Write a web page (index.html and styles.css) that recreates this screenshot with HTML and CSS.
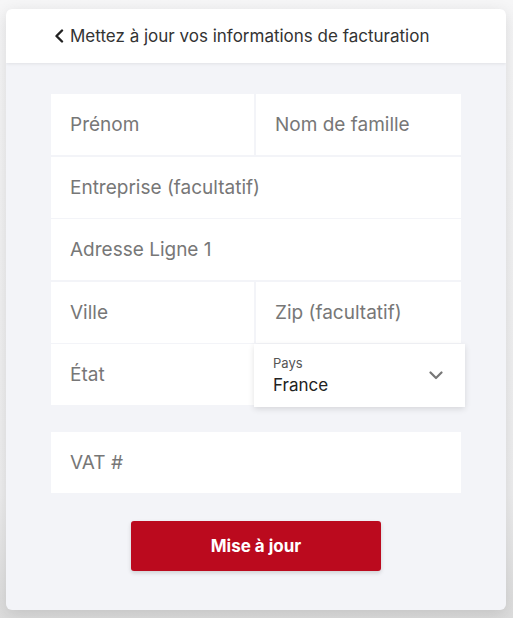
FILE: index.html
```html
<!DOCTYPE html>
<html lang="fr">
<head>
    <meta charset="UTF-8">
    <meta name="viewport" content="width=device-width, initial-scale=1.0">
    <title>Facturation</title>
    <link rel="stylesheet" href="styles.css">
</head>
<body>

<div class="backdrop">
    <div class="card">
        <header class="card-header">
            <svg class="back-icon" width="10" height="14" viewBox="0 0 10 14">
                <path d="M8 1.5 L2.5 7 L8 12.5" fill="none" stroke="#222" stroke-width="2.4" stroke-linecap="round" stroke-linejoin="round"/>
            </svg>
            <span class="title">Mettez à jour vos informations de facturation</span>
        </header>

        <div class="card-body">
            <div class="fields">
                <div class="field">Prénom</div>
                <div class="field">Nom de famille</div>
                <div class="field wide">Entreprise (facultatif)</div>
                <div class="field wide">Adresse Ligne 1</div>
                <div class="field">Ville</div>
                <div class="field">Zip (facultatif)</div>
                <div class="field">État</div>
                <div class="field select">
                    <div class="select-text">
                        <span class="select-label">Pays</span>
                        <span class="select-value">France</span>
                    </div>
                    <svg class="chevron" width="14" height="9" viewBox="0 0 14 9">
                        <path d="M1.5 1.5 L7 7 L12.5 1.5" fill="none" stroke="#777" stroke-width="2.2" stroke-linecap="round" stroke-linejoin="round"/>
                    </svg>
                </div>
            </div>

            <div class="field vat">VAT #</div>

            <div class="actions">
                <button class="btn-update">Mise à jour</button>
            </div>
        </div>
    </div>
</div>

</body>
</html>
```

FILE: styles.css
```css
body {
    margin: 0;
    padding: 0;
    font-family: 'Inter', 'Roboto', sans-serif;
    background-color: #d9d9d9;
    overflow: hidden;
}
.backdrop {
    height: 618px;
    padding: 9px 7px 0 6px;
    box-sizing: border-box;
    background: linear-gradient(180deg, #f6f6f7 0%, #eeeeef 80%, #dcdcdc 100%);
}
.card {
    height: 601px;
    border-radius: 6px;
    overflow: hidden;
    background-color: #f3f4f8;
    box-shadow: 0 4px 16px rgba(0, 0, 0, 0.12);
}
.card-header {
    height: 54px;
    background-color: white;
    display: flex;
    align-items: center;
    padding-left: 48px;
    box-shadow: 0 1px 3px rgba(0, 0, 0, 0.08);
    position: relative;
}
.back-icon {
    margin-right: 6px;
}
.title {
    font-size: 17px;
    color: #333;
}
.card-body {
    padding: 31px 45px 0 45px;
}
.fields {
    display: grid;
    grid-template-columns: 203px 205px;
    grid-auto-rows: 61px;
    gap: 1.5px 2px;
}
.field {
    background-color: white;
    display: flex;
    align-items: center;
    padding-left: 19px;
    font-size: 19px;
    color: #777;
    box-sizing: border-box;
}
.field.wide {
    grid-column: span 2;
}
.select {
    margin: 0 -4px 0 -2px;
    height: 63px;
    padding-left: 19px;
    padding-right: 22px;
    justify-content: space-between;
    box-shadow: 0 2px 6px rgba(0, 0, 0, 0.12);
    position: relative;
    z-index: 1;
}
.select-text {
    display: flex;
    flex-direction: column;
}
.select-label {
    font-size: 13px;
    color: #555;
    line-height: 16px;
    margin-bottom: 3px;
}
.select-value {
    font-size: 17px;
    color: #222;
    line-height: 22px;
}
.vat {
    margin-top: 27px;
    height: 61px;
}
.actions {
    display: flex;
    justify-content: center;
    margin-top: 28px;
}
.btn-update {
    width: 250px;
    height: 50px;
    background-color: #bb0a1e;
    color: white;
    border: none;
    border-radius: 3px;
    font-family: 'Inter', sans-serif;
    font-size: 17px;
    font-weight: 700;
    box-shadow: 0 2px 4px rgba(0, 0, 0, 0.15);
    cursor: pointer;
}
```
